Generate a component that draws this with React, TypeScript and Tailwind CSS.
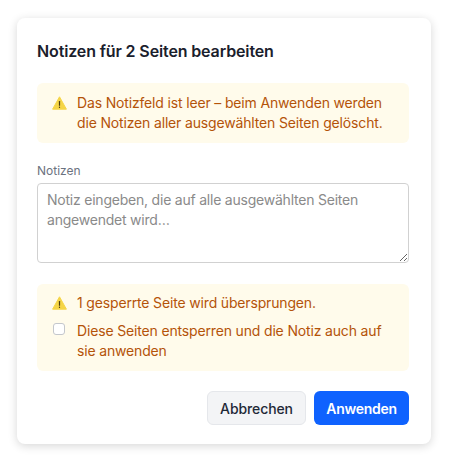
function WarnIcon() {
  return (
    <svg viewBox="0 0 15 14" className="h-[14px] w-[15px] shrink-0">
      <path d="M7.5 0.8 L14.4 13.2 L0.6 13.2 Z" fill="#f5d547" stroke="#f5d547" strokeWidth="1" strokeLinejoin="round" />
      <rect x="6.9" y="5" width="1.2" height="4.8" rx="0.5" fill="#4a3b10" />
      <rect x="6.9" y="10.6" width="1.2" height="1.3" rx="0.4" fill="#4a3b10" />
    </svg>
  )
}

export default function App() {
  return (
    <div className="min-h-[460px] bg-white pl-[17px] pr-[18px] pt-[18px] font-['Inter',sans-serif]">
      <div className="flex h-[426px] w-[414px] flex-col rounded-lg bg-white pl-5 pr-[22px] pt-5 shadow-[0_2px_10px_rgba(0,0,0,0.16)]">
        <h2 className="text-[16px] leading-[26px] font-semibold tracking-[-0.13px] text-[#1a202c]">Notizen für 2 Seiten bearbeiten</h2>

        <div className="mt-[19px] flex h-[60px] rounded-md bg-[#fffbeb] py-2.5 pl-[15px] pr-4 text-[14px] leading-5 tracking-[-0.16px] text-[#b45309]">
          <div className="mr-[10px] pt-[3px]">
            <WarnIcon />
          </div>
          <p>Das Notizfeld ist leer – beim Anwenden werden die Notizen aller ausgewählten Seiten gelöscht.</p>
        </div>

        <label className="mt-[19px] block text-[12px] leading-[18px] text-[#6b7280]">Notizen</label>
        <textarea
          className="mt-[3px] block h-20 w-full rounded border border-[#d1d1d1] px-[9px] py-[6px] text-[14px] leading-5 tracking-[-0.22px] text-[#1f2937] outline-none placeholder:text-[#8a8a8a]"
          placeholder="Notiz eingeben, die auf alle ausgewählten Seiten angewendet wird…"
        />

        <div className="mt-[21px] h-[87px] rounded-md bg-[#fffbeb] pl-[15px] pr-4 pt-[9px] text-[14px] leading-5 tracking-[-0.16px] text-[#b45309]">
          <div className="flex">
            <div className="mr-[10px] pt-[3px]">
              <WarnIcon />
            </div>
            <p>1 gesperrte Seite wird übersprungen.</p>
          </div>
          <label className="mt-2 flex">
            <span className="ml-[1px] mr-3 mt-[2px] h-[12px] w-[12px] shrink-0 rounded-[3px] border border-[#c4c7cc] bg-white" />
            <span>Diese Seiten entsperren und die Notiz auch auf sie anwenden</span>
          </label>
        </div>

        <div className="mt-5 flex justify-end gap-2">
          <button className="h-[34px] w-[99px] rounded-md border border-[#e5e7eb] bg-[#f3f4f6] text-[14px] font-medium tracking-[-0.1px] text-[#1f2937]">Abbrechen</button>
          <button className="h-[34px] w-[95px] rounded-md bg-[#0f62fe] text-[14px] font-semibold tracking-[-0.3px] text-white">Anwenden</button>
        </div>
      </div>
    </div>
  )
}
